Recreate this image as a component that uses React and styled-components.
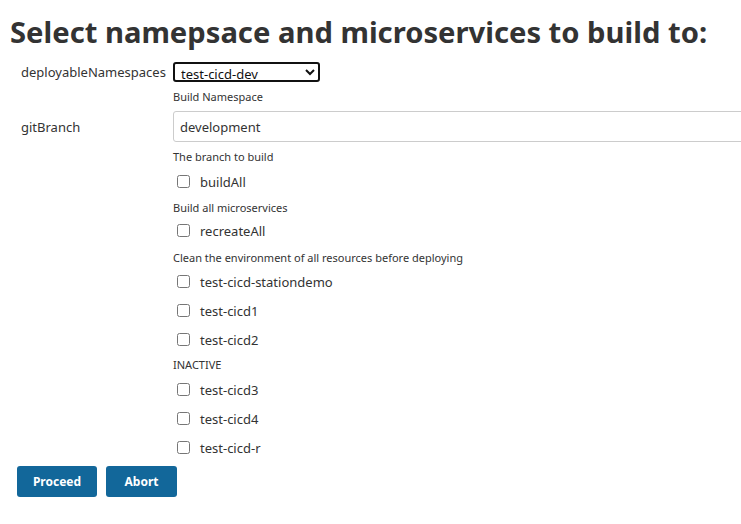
import React from 'react';
import styled, { createGlobalStyle } from 'styled-components';

const GlobalStyle = createGlobalStyle`
  html, body {
    margin: 0;
    padding: 0;
    background: #fff;
    overflow: hidden;
  }
  body {
    font-family: "Noto Sans", "Open Sans", sans-serif;
    color: #333;
  }
`;

const Page = styled.div`
  padding: 0 8px;
  width: 741px;
  box-sizing: border-box;
`;

const Title = styled.h1`
  margin: 0;
  padding: 12px 0 0 2px;
  font-size: 29.2px;
  line-height: 40px;
  font-weight: 700;
  color: #333;
  white-space: nowrap;
`;

const Form = styled.div`
  display: grid;
  grid-template-columns: 152px 1fr;
  padding: 10px 0 0 13px;
`;

const Label = styled.div`
  font-size: 13px;
  color: #333;
  display: flex;
  align-items: center;
  height: ${p => p.$h || 20}px;
  white-space: nowrap;
`;

const Field = styled.div`
  display: flex;
  flex-direction: column;
  min-width: 0;
`;

const Select = styled.select`
  width: 147px;
  height: 20px;
  font-family: inherit;
  font-size: 13px;
  color: #111;
  border: 2px solid #111;
  border-radius: 3px;
  padding: 0 2px;
  background: #fff;
  box-sizing: border-box;
`;

const TextInput = styled.input`
  width: 600px;
  height: 31px;
  box-sizing: border-box;
  border: 1px solid #ccc;
  border-radius: 3px;
  padding: 0 6px;
  font-family: inherit;
  font-size: 13px;
  color: #333;
  background: #fff;
`;

const Desc = styled.div`
  font-size: 11px;
  line-height: 16px;
  color: #333;
  padding: ${p => p.$pad || '3px 0 1px'};
`;

const CheckRow = styled.label`
  display: flex;
  align-items: center;
  height: 29px;
  font-size: 13px;
  color: #333;
`;

const Check = styled.input.attrs({ type: 'checkbox' })`
  width: 13px;
  height: 13px;
  margin: 0 10px 0 4px;
`;

const Empty = styled.div``;

const Buttons = styled.div`
  display: flex;
  gap: 9px;
  padding: 4px 0 0 9px;
`;

const Button = styled.button`
  height: 31px;
  width: ${p => p.$w}px;
  padding: 0;
  background: #12679a;
  color: #fff;
  border: none;
  border-radius: 3px;
  font-family: inherit;
  font-size: 12px;
  font-weight: 700;
  cursor: pointer;
`;

const services = ['test-cicd-stationdemo', 'test-cicd1', 'test-cicd2'];
const inactive = ['test-cicd3', 'test-cicd4', 'test-cicd-r'];

export default function App() {
  return (
    <Page>
      <GlobalStyle />
      <Title>Select namepsace and microservices to build to:</Title>
      <Form>
        <Label>deployableNamespaces</Label>
        <Field>
          <Select defaultValue="test-cicd-dev">
            <option>test-cicd-dev</option>
          </Select>
          <Desc $pad="7px 0 6px">Build Namespace</Desc>
        </Field>

        <Label $h={31}>gitBranch</Label>
        <Field>
          <TextInput defaultValue="development" />
          <Desc $pad="7px 0 2px">The branch to build</Desc>
          <CheckRow><Check />buildAll</CheckRow>
          <Desc $pad="4px 0 0">Build all microservices</Desc>
          <CheckRow><Check />recreateAll</CheckRow>
          <Desc $pad="5px 0 1px">Clean the environment of all resources before deploying</Desc>
          {services.map(s => (
            <CheckRow key={s}><Check />{s}</CheckRow>
          ))}
          <Desc $pad="3px 0 2px">INACTIVE</Desc>
          {inactive.map(s => (
            <CheckRow key={s}><Check />{s}</CheckRow>
          ))}
        </Field>
        <Empty />
      </Form>
      <Buttons>
        <Button $w={80}>Proceed</Button>
        <Button $w={71}>Abort</Button>
      </Buttons>
    </Page>
  );
}
